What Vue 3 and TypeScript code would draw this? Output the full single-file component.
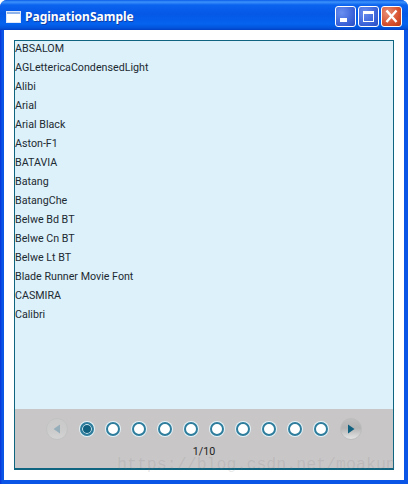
<template>
  <div class="window">
    <header class="titlebar">
      <svg class="app-icon" width="15" height="12" viewBox="0 0 15 12">
        <rect x="0.5" y="0.5" width="14" height="11" fill="#fff" stroke="#dfe8f8" />
        <rect x="1" y="1" width="13" height="2" fill="#8fb4ec" />
      </svg>
      <span class="title">PaginationSample</span>
      <div class="caption-buttons">
        <button class="cap cap-blue">
          <svg width="21" height="21" viewBox="0 0 21 21"><rect x="5" y="12" width="7" height="4" fill="#fff" /></svg>
        </button>
        <button class="cap cap-blue">
          <svg width="21" height="21" viewBox="0 0 21 21">
            <rect x="5.5" y="5.5" width="10" height="10" fill="none" stroke="#fff" />
            <rect x="5" y="5" width="11" height="3" fill="#fff" />
          </svg>
        </button>
        <button class="cap cap-red">
          <svg width="21" height="21" viewBox="0 0 21 21">
            <path d="M5.5 4.5l10 11.5M15.5 4.5L5.5 16" stroke="#fff" stroke-width="2.4" fill="none" />
          </svg>
        </button>
      </div>
    </header>

    <main class="client">
      <section class="pagination">
        <ul class="list">
          <li v-for="font in fonts" :key="font">{{ font }}</li>
        </ul>
        <footer class="pager">
          <div class="pager-row">
            <button class="nav nav-disabled">
              <svg width="12" height="12" viewBox="0 0 12 12"><path d="M9 1.5v9L2.5 6z" fill="#8aa9b8" /></svg>
            </button>
            <span
              v-for="n in pageCount"
              :key="n"
              class="dot"
              :class="{ current: n === currentPage }"
            ></span>
            <button class="nav">
              <svg width="12" height="12" viewBox="0 0 12 12"><path d="M3 1.5v9L9.5 6z" fill="#10607f" /></svg>
            </button>
          </div>
          <div class="page-label">{{ currentPage }}/{{ pageCount }}</div>
        </footer>
      </section>
      <div class="watermark">https://blog.csdn.net/moakun</div>
    </main>
  </div>
</template>

<script setup lang="ts">
const fonts: string[] = [
  "ABSALOM",
  "AGLettericaCondensedLight",
  "Alibi",
  "Arial",
  "Arial Black",
  "Aston-F1",
  "BATAVIA",
  "Batang",
  "BatangChe",
  "Belwe Bd BT",
  "Belwe Cn BT",
  "Belwe Lt BT",
  "Blade Runner Movie Font",
  "CASMIRA",
  "Calibri",
];

const currentPage = 1;
const pageCount = 10;
</script>

<style>
html,
body {
  margin: 0;
  overflow: hidden;
}
</style>

<style scoped>
.window {
  width: 408px;
  height: 484px;
  box-sizing: border-box;
  display: flex;
  flex-direction: column;
  padding: 0 4px 4px;
  border-radius: 7px 7px 0 0;
  background: linear-gradient(90deg, #0831d9 0, #0a54e6 2px, #0a54e6 100%);
  background-color: #0831d9;
  font-family: Roboto, sans-serif;
}

.titlebar {
  height: 30px;
  box-sizing: border-box;
  margin: 0 -4px;
  padding: 3px 6px 0 6px;
  flex: none;
  display: flex;
  align-items: center;
  border-radius: 7px 7px 0 0;
  background: linear-gradient(180deg, #0a5be8 0, #3d93fb 2px, #0a63ee 5px, #0558e6 14px, #0463ef 24px, #0353db 28px, #0240c4 30px);
}

.app-icon {
  margin-right: 4px;
}

.title {
  color: #fff;
  font-family: "Noto Sans", sans-serif;
  font-weight: bold;
  font-size: 12px;
  text-shadow: 1px 1px 0 #0f3fa8;
}

.caption-buttons {
  margin-left: auto;
  display: flex;
  gap: 2px;
}

.cap {
  width: 21px;
  height: 21px;
  padding: 0;
  box-sizing: border-box;
  border: 1px solid #fff;
  border-radius: 3px;
  display: block;
}

.cap svg {
  display: block;
  margin: -1px;
}

.cap-blue {
  background: radial-gradient(circle at 30% 30%, #6a8ff0, #3a62d8 65%, #2a4cc0);
}

.cap-red {
  background: radial-gradient(circle at 30% 30%, #e89078, #d8512f 60%, #b83a18);
}

.client {
  flex: 1;
  position: relative;
  padding: 10px;
  background: #fff;
  display: flex;
  min-height: 0;
}

.pagination {
  flex: 1;
  display: flex;
  flex-direction: column;
  border: 1px solid #0f6480;
  border-bottom-width: 2px;
  background: #dcf1f9;
}

.list {
  flex: 1;
  margin: 0;
  padding: 1px 0 0;
  list-style: none;
  font-size: 10.7px;
  color: #1c2a33;
}

.list li {
  height: 19px;
  line-height: 14px;
}

.pager {
  height: 59px;
  flex: none;
  background: #c8c6c7;
  display: flex;
  flex-direction: column;
  align-items: center;
}

.pager-row {
  margin-top: 9px;
  display: flex;
  align-items: center;
  gap: 8px;
  height: 22px;
}

.nav {
  width: 22px;
  height: 22px;
  padding: 0;
  display: flex;
  align-items: center;
  justify-content: center;
  border-radius: 50%;
  border: 1px solid #bdbdbd;
  background: linear-gradient(180deg, #bfbfbf, #b4b4b4 45%, #e4e4e4);
}

.nav-disabled {
  opacity: 0.8;
  background: linear-gradient(180deg, #cbcbcb, #cecece 60%, #d8d8d8);
  border-color: #c2c2c2;
}

.dot {
  width: 10px;
  height: 10px;
  border-radius: 50%;
  border: 2px solid #2f7d9c;
  background: #fff;
  box-shadow: 0 0 0 1px #e4f3f8;
  margin: 0 2px;
}

.dot:nth-child(2) {
  margin-left: 4px;
}

.dot:nth-last-child(2) {
  margin-right: 4px;
}

.dot.current {
  background: #10607f;
  box-shadow: inset 0 0 0 1px #d8eef6, 0 0 0 1px #e4f3f8;
}

.page-label {
  margin-top: 6px;
  font-size: 10.7px;
  line-height: 12px;
  color: #1c1c1c;
}

.watermark {
  position: absolute;
  left: 113px;
  bottom: 9px;
  font-family: "Liberation Mono", monospace;
  font-size: 16.6px;
  line-height: 12px;
  color: rgba(120, 120, 120, 0.16);
  white-space: nowrap;
}
</style>
